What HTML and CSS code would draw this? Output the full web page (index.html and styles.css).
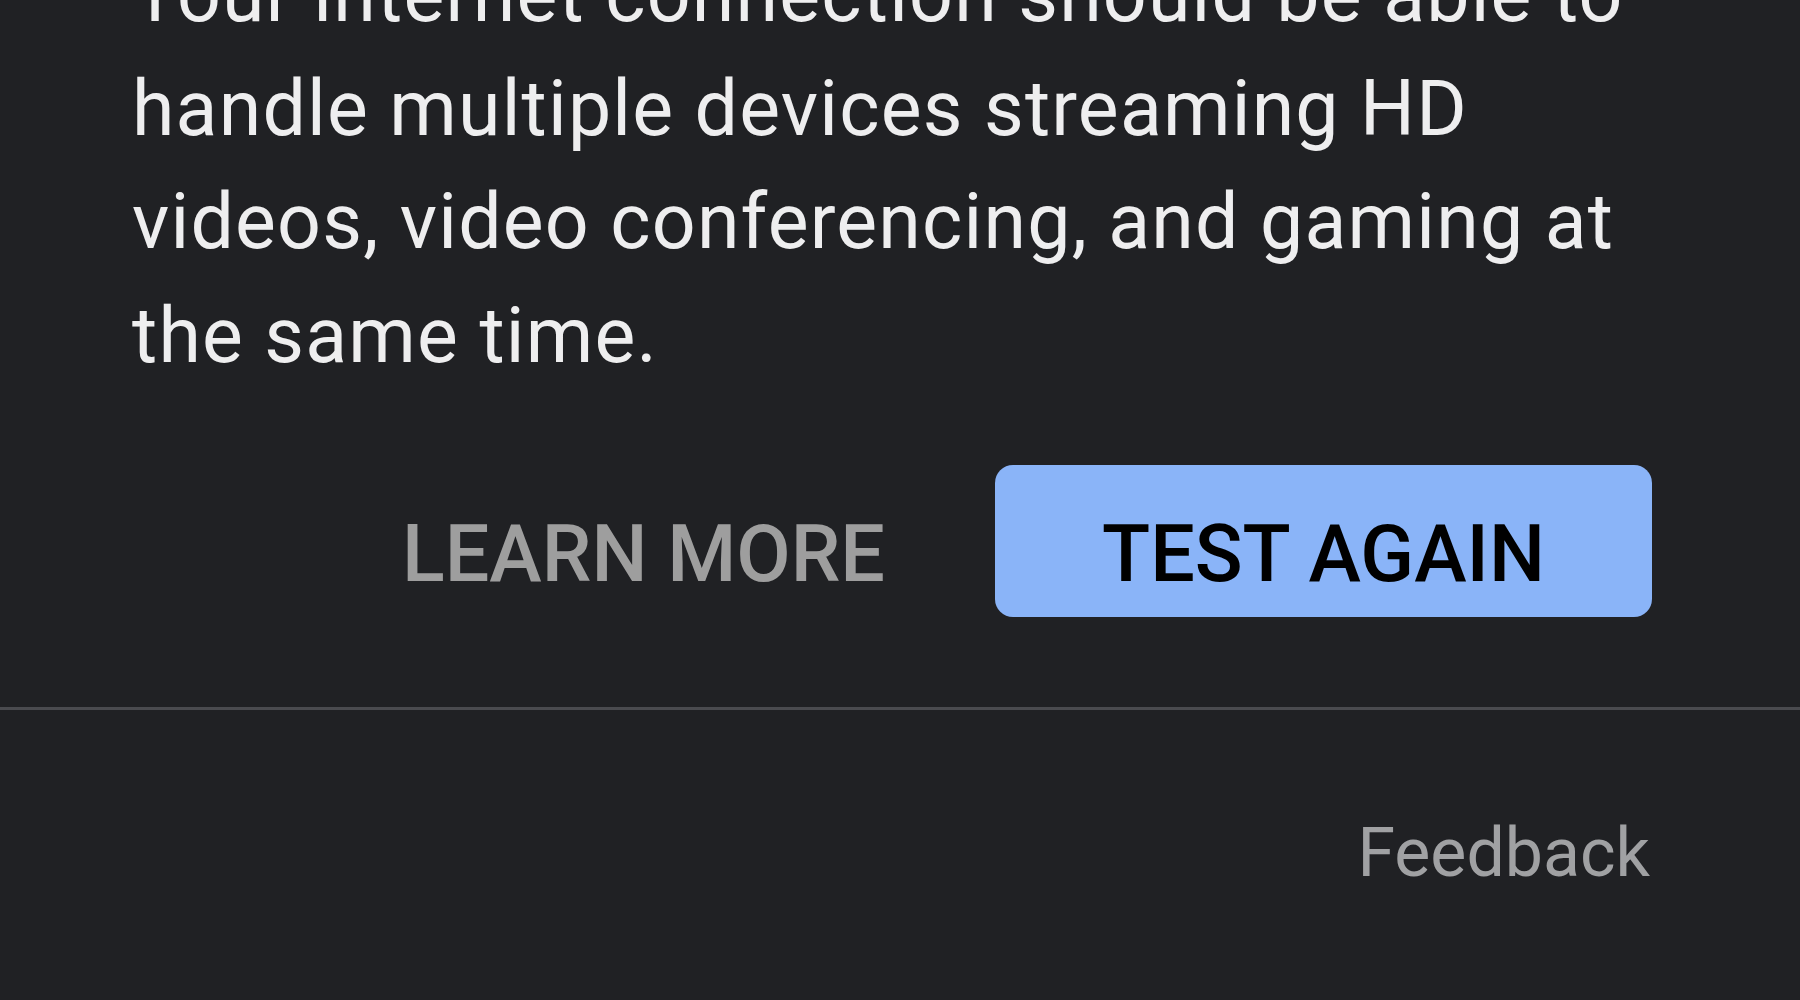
FILE: index.html
```html
<!DOCTYPE html>
<html lang="en">
<head>
    <meta charset="UTF-8">
    <title>Internet speed test</title>
    <link rel="stylesheet" href="styles.css">
</head>
<body>
<div class="result">
    <p class="summary">Your internet connection should be able to handle multiple devices streaming HD videos, video conferencing, and gaming at the same time.</p>
    <div class="actions">
        <button class="btn-text">LEARN MORE</button>
        <button class="btn-primary">TEST AGAIN</button>
    </div>
</div>
<div class="footer">
    <a class="feedback" href="#">Feedback</a>
</div>
</body>
</html>
```

FILE: styles.css
```css
body {
    font-family: Roboto, "Noto Sans", Arial, sans-serif;
    background-color: #202124;
    color: #eeeeef;
    margin: 0;
    padding: 0;
    overflow: hidden;
}
.result {
    padding: 0 148px 0 132px;
}
.summary {
    font-size: 77px;
    line-height: 113.6px;
    letter-spacing: 1.2px;
    margin: -61px 0 0 0;
}
.actions {
    display: flex;
    justify-content: flex-end;
    align-items: center;
    gap: 110px;
    margin-top: 72px;
    padding-bottom: 90px;
}
.actions button {
    font-family: inherit;
    font-weight: 500;
    font-size: 79px;
    border: none;
    cursor: pointer;
    padding-top: 26px;
}
.btn-text {
    background: none;
    color: #9e9e9e;
    padding-left: 0;
    padding-right: 0;
}
.btn-primary {
    background-color: #8ab4f8;
    color: #000;
    width: 657px;
    height: 152px;
    border-radius: 18px;
}
.footer {
    border-top: 3px solid #4a4b4f;
    display: flex;
    justify-content: flex-end;
    padding: 103px 150px 0 0;
}
.feedback {
    color: #a0a1a3;
    font-size: 68px;
    text-decoration: none;
}
```
